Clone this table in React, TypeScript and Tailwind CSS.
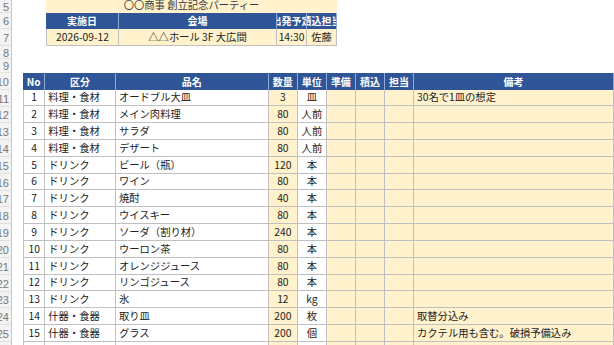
import React from 'react'

interface Item {
  no: number
  kubun: string
  hinmei: string
  suryo: number
  tani: string
  biko?: string
}

const items: Item[] = [
  { no: 1, kubun: '料理・食材', hinmei: 'オードブル大皿', suryo: 3, tani: '皿', biko: '30名で1皿の想定' },
  { no: 2, kubun: '料理・食材', hinmei: 'メイン肉料理', suryo: 80, tani: '人前' },
  { no: 3, kubun: '料理・食材', hinmei: 'サラダ', suryo: 80, tani: '人前' },
  { no: 4, kubun: '料理・食材', hinmei: 'デザート', suryo: 80, tani: '人前' },
  { no: 5, kubun: 'ドリンク', hinmei: 'ビール（瓶）', suryo: 120, tani: '本' },
  { no: 6, kubun: 'ドリンク', hinmei: 'ワイン', suryo: 80, tani: '本' },
  { no: 7, kubun: 'ドリンク', hinmei: '焼酎', suryo: 40, tani: '本' },
  { no: 8, kubun: 'ドリンク', hinmei: 'ウイスキー', suryo: 80, tani: '本' },
  { no: 9, kubun: 'ドリンク', hinmei: 'ソーダ（割り材）', suryo: 240, tani: '本' },
  { no: 10, kubun: 'ドリンク', hinmei: 'ウーロン茶', suryo: 80, tani: '本' },
  { no: 11, kubun: 'ドリンク', hinmei: 'オレンジジュース', suryo: 80, tani: '本' },
  { no: 12, kubun: 'ドリンク', hinmei: 'リンゴジュース', suryo: 80, tani: '本' },
  { no: 13, kubun: 'ドリンク', hinmei: '氷', suryo: 12, tani: 'kg' },
  { no: 14, kubun: '什器・食器', hinmei: '取り皿', suryo: 200, tani: '枚', biko: '取替分込み' },
  { no: 15, kubun: '什器・食器', hinmei: 'グラス', suryo: 200, tani: '個', biko: 'カクテル用も含む。破損予備込み' },
]

// 行の高さ（シート行 5〜26）
const rowHeights: { label: number; h: string }[] = [
  { label: 5, h: 'h-[13px]' },
  { label: 6, h: 'h-[16px]' },
  { label: 7, h: 'h-[17px]' },
  { label: 8, h: 'h-[13px]' },
  { label: 9, h: 'h-[14px]' },
  { label: 10, h: 'h-[17px]' },
  { label: 11, h: 'h-[17px]' },
  { label: 12, h: 'h-[16px]' },
  { label: 13, h: 'h-[17px]' },
  { label: 14, h: 'h-[17px]' },
  { label: 15, h: 'h-[17px]' },
  { label: 16, h: 'h-[17px]' },
  { label: 17, h: 'h-[16px]' },
  { label: 18, h: 'h-[17px]' },
  { label: 19, h: 'h-[17px]' },
  { label: 20, h: 'h-[17px]' },
  { label: 21, h: 'h-[17px]' },
  { label: 22, h: 'h-[17px]' },
  { label: 23, h: 'h-[16px]' },
  { label: 24, h: 'h-[17px]' },
  { label: 25, h: 'h-[17px]' },
  { label: 26, h: 'h-[17px]' },
]

const dataHeights = rowHeights.slice(6).map(r => r.h)

const hd = 'flex items-center justify-center overflow-hidden whitespace-nowrap bg-[#2f5597] text-white font-bold text-[10px] border-r border-[#8eaadb]'
const cell = 'flex items-center overflow-hidden whitespace-nowrap border-r border-b border-[#c0c0c0]'
const cream = 'bg-[#fff2cc]'

function RowHeaders() {
  return (
    <div className="flex flex-col w-[12px] shrink-0 bg-[#f3f3f3] border-r border-[#c8c8c8]">
      {rowHeights.map(r => (
        <div key={r.label} className={`${r.h} shrink-0 flex items-center justify-end overflow-hidden border-b border-[#e0e0e0] text-[11px] text-[#777] font-['Liberation_Sans',sans-serif] pr-[2px]`}>
          <span className="whitespace-nowrap translate-y-[1px]">{r.label}</span>
        </div>
      ))}
    </div>
  )
}

function EventTable() {
  return (
    <>
      <div className="flex h-[13px] shrink-0">
        <div className="w-[34px] shrink-0" />
        <div className="w-[291px] flex justify-center bg-[#fff2cc] text-[#3a3a3a] leading-[10px]">
          〇〇商事 創立記念パーティー
        </div>
      </div>
      <div className="flex h-[16px] shrink-0">
        <div className="w-[34px] shrink-0" />
        <div className={`${hd} w-[73px]`}>実施日</div>
        <div className={`${hd} w-[158px]`}>会場</div>
        <div className={`${hd} w-[30px]`}>出発予定</div>
        <div className={`${hd} w-[30px]`}>積込担当</div>
      </div>
      <div className="flex h-[17px] shrink-0">
        <div className="w-[34px] shrink-0" />
        <div className={`${cell} ${cream} w-[73px] justify-center border-l`}>2026-09-12</div>
        <div className={`${cell} ${cream} w-[158px] justify-center`}>△△ホール 3F 大広間</div>
        <div className={`${cell} ${cream} w-[30px] justify-center`}>14:30</div>
        <div className={`${cell} ${cream} w-[30px] justify-center`}>佐藤</div>
      </div>
      <div className="h-[13px] shrink-0" />
      <div className="h-[14px] shrink-0" />
    </>
  )
}

function ItemRow({ item, h }: { item?: Item; h: string }) {
  return (
    <div className={`flex ${h} shrink-0`}>
      <div className="w-[11px] shrink-0" />
      <div className={`${cell} w-[23px] justify-center border-l`}>{item?.no}</div>
      <div className={`${cell} w-[73px] pl-[3px]`}>{item?.kubun}</div>
      <div className={`${cell} w-[158px] pl-[3px]`}>{item?.hinmei}</div>
      <div className={`${cell} ${cream} w-[30px] justify-center`}>{item?.suryo}</div>
      <div className={`${cell} w-[30px] justify-center`}>{item?.tani}</div>
      <div className={`${cell} ${cream} w-[30px]`} />
      <div className={`${cell} ${cream} w-[30px]`} />
      <div className={`${cell} ${cream} w-[30px]`} />
      <div className={`${cell} ${cream} flex-1 min-w-[200px] pl-[3px]`}>{item?.biko}</div>
    </div>
  )
}

export default function App() {
  return (
    <div className="flex w-[614px] h-[345px] overflow-hidden bg-white text-[10.3px] leading-none text-[#222] font-['Noto_Sans_CJK_JP','Noto_Sans',sans-serif]">
      <RowHeaders />
      <div className="flex flex-col flex-1 min-w-0 overflow-hidden">
        <EventTable />
        <div className="flex h-[17px] shrink-0">
          <div className="w-[11px] shrink-0" />
          <div className={`${hd} w-[23px]`}>No</div>
          <div className={`${hd} w-[73px]`}>区分</div>
          <div className={`${hd} w-[158px]`}>品名</div>
          <div className={`${hd} w-[30px]`}>数量</div>
          <div className={`${hd} w-[30px]`}>単位</div>
          <div className={`${hd} w-[30px]`}>準備</div>
          <div className={`${hd} w-[30px]`}>積込</div>
          <div className={`${hd} w-[30px]`}>担当</div>
          <div className={`${hd} flex-1 min-w-[200px]`}>備考</div>
        </div>
        {items.map((it, i) => (
          <ItemRow key={it.no} item={it} h={dataHeights[i + 1]} />
        ))}
        <ItemRow h="h-[17px]" />
      </div>
    </div>
  )
}
